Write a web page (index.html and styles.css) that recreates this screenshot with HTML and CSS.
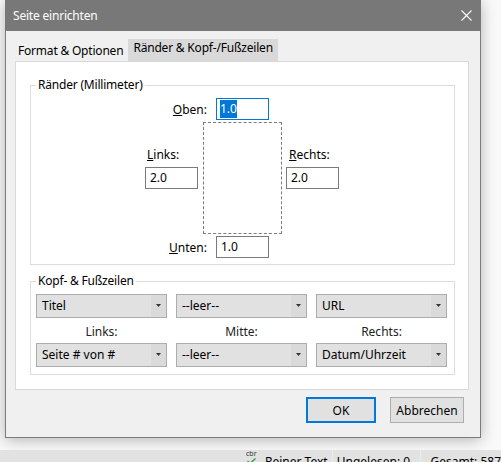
FILE: index.html
```html
<!DOCTYPE html>
<html lang="de">
<head>
<meta charset="utf-8">
<title>Seite einrichten</title>
<link rel="stylesheet" href="styles.css">
</head>
<body>
<div class="screen">
  <div class="dialog">
    <div class="titlebar">
      <span class="title">Seite einrichten</span>
      <svg class="close" width="11" height="11" viewBox="0 0 11 11"><path d="M0.5 0.5 L10.5 10.5 M10.5 0.5 L0.5 10.5" stroke="#ffffff" stroke-width="1.1" fill="none"/></svg>
    </div>
    <div class="body">
      <div class="tabs">
        <div class="tab">Format &amp; Optionen</div>
        <div class="tab tab-active">Ränder &amp; Kopf-/Fußzeilen</div>
      </div>
      <div class="panel">
        <div class="group group-margins">
          <span class="legend">Ränder (Millimeter)</span>
          <div class="hrow">
            <span class="hlabel"><u>O</u>ben:</span>
            <div class="field field-focused"><span class="sel">1.0</span></div>
          </div>
          <div class="mid">
            <div class="side">
              <span class="slabel"><u>L</u>inks:</span>
              <div class="field">2.0</div>
            </div>
            <div class="page"></div>
            <div class="side side-right">
              <span class="slabel"><u>R</u>echts:</span>
              <div class="field">2.0</div>
            </div>
          </div>
          <div class="hrow hrow-bottom">
            <span class="hlabel"><u>U</u>nten:</span>
            <div class="field">1.0</div>
          </div>
        </div>
        <div class="group group-hf">
          <span class="legend">Kopf- &amp; Fußzeilen</span>
          <div class="selects">
            <div class="select"><span class="sval">Titel</span><span class="sarrow"><svg width="5" height="3" viewBox="0 0 5 3"><polygon points="0,0 5,0 2.5,3" fill="#333"/></svg></span></div>
            <div class="select"><span class="sval">--leer--</span><span class="sarrow"><svg width="5" height="3" viewBox="0 0 5 3"><polygon points="0,0 5,0 2.5,3" fill="#333"/></svg></span></div>
            <div class="select"><span class="sval">URL</span><span class="sarrow"><svg width="5" height="3" viewBox="0 0 5 3"><polygon points="0,0 5,0 2.5,3" fill="#333"/></svg></span></div>
            <span class="clabel">Links:</span>
            <span class="clabel">Mitte:</span>
            <span class="clabel">Rechts:</span>
            <div class="select"><span class="sval">Seite # von #</span><span class="sarrow"><svg width="5" height="3" viewBox="0 0 5 3"><polygon points="0,0 5,0 2.5,3" fill="#333"/></svg></span></div>
            <div class="select"><span class="sval">--leer--</span><span class="sarrow"><svg width="5" height="3" viewBox="0 0 5 3"><polygon points="0,0 5,0 2.5,3" fill="#333"/></svg></span></div>
            <div class="select"><span class="sval">Datum/Uhrzeit</span><span class="sarrow"><svg width="5" height="3" viewBox="0 0 5 3"><polygon points="0,0 5,0 2.5,3" fill="#333"/></svg></span></div>
          </div>
        </div>
      </div>
      <div class="buttons">
        <div class="btn btn-default">OK</div>
        <div class="btn btn-cancel">Abbrechen</div>
      </div>
    </div>
  </div>
  <div class="statusbar">
    <div class="sitem sitem-format">
      <span class="ficon"><span class="ficon-text">cbr</span><svg class="ficon-check" width="9" height="6" viewBox="0 0 9 6"><path d="M0.5 3 L3 5.5 L8.5 0.5" stroke="#3aa53a" stroke-width="1.5" fill="none"/></svg></span>
      <span>Reiner Text</span>
    </div>
    <div class="sitem sitem-unread">Ungelesen: 0</div>
    <div class="sitem sitem-total">Gesamt: 587</div>
  </div>
</div>
</body>
</html>
```
FILE: styles.css
```css
* { box-sizing: border-box; }
html, body { margin: 0; padding: 0; }
body {
  font-family: "Noto Sans", "Open Sans", sans-serif;
  font-size: 12px;
  color: #000;
  background: #f7f7f7;
}
.screen {
  width: 501px;
  height: 462px;
  overflow: hidden;
  display: flex;
  flex-direction: column;
  background: #f9f9f9;
}
.dialog {
  margin-left: 5px;
  width: 476px;
  height: 438px;
  flex: none;
  border: 1px solid #7b7b7b;
  border-top: none;
  background: #f0f0f0;
  box-shadow: 0 2px 14px rgba(0, 0, 0, 0.28);
  display: flex;
  flex-direction: column;
}
.titlebar {
  height: 31px;
  flex: none;
  background: #787878;
  display: flex;
  align-items: center;
  justify-content: space-between;
  padding: 0 9px 0 8px;
  color: #ffffff;
  margin: 0 -1px;
}
.title { font-size: 12px; letter-spacing: -0.2px; }
.close { display: block; margin-top: -1px; }
.body {
  padding: 8px 11px 0 9px;
}
.tabs {
  display: flex;
  align-items: flex-end;
  height: 22px;
}
.tab {
  height: 20px;
  line-height: 19px;
  padding: 0 5px 0 3px;
  white-space: nowrap;
  letter-spacing: -0.2px;
}
.tab-active {
  height: 22px;
  line-height: 18px;
  padding: 0 5px 0 5px;
  background: #d9d9d9;
}
.panel {
  width: 454px;
  height: 329px;
  background: #ffffff;
  border: 1px solid #d9d9d9;
  padding: 23px 13px 14px 14px;
}
.group {
  position: relative;
  border: 1px solid #dcdcdc;
}
.legend {
  position: absolute;
  top: -9px;
  left: 5px;
  padding: 0 2px;
  line-height: 16px;
  background: #ffffff;
  letter-spacing: -0.2px;
}
.group-margins {
  height: 180px;
  padding: 12px 0 6px 0;
}
.hrow {
  display: flex;
  align-items: center;
  height: 22px;
  padding-left: 116px;
}
.hlabel {
  width: 60px;
  text-align: right;
  margin-right: 9px;
}
.hrow-bottom { margin-top: 2px; }
.field {
  width: 53px;
  height: 22px;
  border: 1px solid #7a7a7a;
  background: #ffffff;
  padding-left: 4px;
  line-height: 20px;
}
.field-focused {
  border-color: #0078d7;
  padding-left: 3px;
  display: flex;
  align-items: center;
}
.sel {
  background: #0078d7;
  color: #ffffff;
  line-height: 18px;
}
.mid {
  display: flex;
  margin-top: 2px;
  height: 112px;
  padding-left: 114px;
}
.side {
  width: 53px;
  padding-top: 25px;
  display: flex;
  flex-direction: column;
}
.slabel {
  line-height: 16px;
  margin-bottom: 4px;
  padding-left: 2px;
}
.side-right .slabel { padding-left: 3px; }
.page {
  width: 79px;
  height: 112px;
  border: 1px dashed #7a7a7a;
  margin: 0 4px 0 5px;
}
.group-hf {
  margin-top: 16px;
  height: 94px;
  padding: 12px 6px 7px 5px;
}
.selects {
  display: grid;
  grid-template-columns: 131px 131px 131px;
  grid-template-rows: 24px 25px 24px;
  column-gap: 9px;
}
.select {
  display: flex;
  justify-content: space-between;
  border: 1px solid #adadad;
  background: #e1e1e1;
  line-height: 22px;
}
.sval { padding-left: 5px; white-space: nowrap; }
.sarrow {
  width: 15px;
  background: #dadada;
  display: flex;
  align-items: center;
  justify-content: flex-start;
  padding-left: 5px;
}
.sarrow svg { display: block; margin-top: -1px; }
.clabel {
  align-self: end;
  text-align: center;
  line-height: 16px;
  padding-bottom: 3px;
  color: #222;
}
.buttons {
  display: flex;
  justify-content: flex-end;
  gap: 14px;
  margin-top: 7px;
  padding-right: 5px;
}
.btn {
  height: 26px;
  background: #e1e1e1;
  border: 1px solid #adadad;
  display: flex;
  align-items: center;
  justify-content: center;
}
.btn-default {
  width: 70px;
  border: 2px solid #0078d7;
}
.btn-cancel { width: 74px; }
.statusbar {
  margin-top: 12px;
  flex: 1;
  background: #e2e2e2;
  display: flex;
  padding-left: 244px;
  white-space: nowrap;
}
.sitem {
  line-height: 18px;
  padding-top: 3px;
}
.sitem-format {
  display: flex;
  width: 88px;
}
.ficon {
  position: relative;
  width: 18px;
  height: 18px;
  margin-top: -3px;
  margin-right: 3px;
}
.ficon-text {
  position: absolute;
  left: 2px;
  top: 0px;
  font-size: 7px;
  color: #333;
  line-height: 8px;
}
.ficon-check {
  position: absolute;
  left: 3px;
  top: 8px;
}
.sitem-unread {
  width: 88px;
  padding-left: 4px;
  border-left: 1px solid #ececec;
}
.sitem-total {
  padding-left: 10px;
  border-left: 1px solid #ececec;
}
```
